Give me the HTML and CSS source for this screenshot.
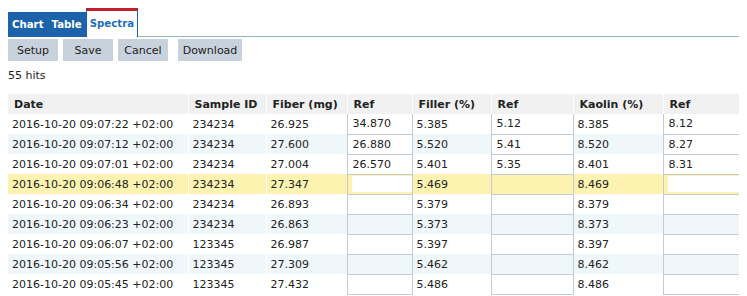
FILE: index.html
```html
<!DOCTYPE html>
<html lang="en">
<head>
    <meta charset="UTF-8">
    <title>Spectra</title>
    <link rel="stylesheet" href="styles.css">
</head>
<body>
    <div class="tabs">
        <span class="tab">Chart</span>
        <span class="tab">Table</span>
        <span class="tab active">Spectra</span>
    </div>

    <div class="toolbar">
        <button class="btn">Setup</button>
        <button class="btn">Save</button>
        <button class="btn">Cancel</button>
        <button class="btn wide">Download</button>
    </div>

    <div class="hits">55 hits</div>

    <table class="grid">
        <colgroup>
            <col style="width: 180px">
            <col style="width: 78px">
            <col style="width: 81px">
            <col style="width: 65px">
            <col style="width: 79px">
            <col style="width: 82px">
            <col style="width: 90px">
            <col style="width: 77px">
        </colgroup>
        <thead>
            <tr>
                <th>Date</th>
                <th>Sample ID</th>
                <th>Fiber (mg)</th>
                <th class="ref-h">Ref</th>
                <th>Filler (%)</th>
                <th class="ref-h">Ref</th>
                <th>Kaolin (%)</th>
                <th class="ref-h">Ref</th>
            </tr>
        </thead>
        <tbody>
            <tr>
                <td>2016-10-20 09:07:22 +02:00</td><td>234234</td><td>26.925</td>
                <td class="ref"><input class="ref-input" value="34.870"></td><td>5.385</td>
                <td class="ref"><input class="ref-input" value="5.12"></td><td>8.385</td>
                <td class="ref"><input class="ref-input" value="8.12"></td>
            </tr>
            <tr class="alt">
                <td>2016-10-20 09:07:12 +02:00</td><td>234234</td><td>27.600</td>
                <td class="ref"><input class="ref-input" value="26.880"></td><td>5.520</td>
                <td class="ref"><input class="ref-input" value="5.41"></td><td>8.520</td>
                <td class="ref"><input class="ref-input" value="8.27"></td>
            </tr>
            <tr>
                <td>2016-10-20 09:07:01 +02:00</td><td>234234</td><td>27.004</td>
                <td class="ref"><input class="ref-input" value="26.570"></td><td>5.401</td>
                <td class="ref"><input class="ref-input" value="5.35"></td><td>8.401</td>
                <td class="ref"><input class="ref-input" value="8.31"></td>
            </tr>
            <tr class="selected">
                <td>2016-10-20 09:06:48 +02:00</td><td>234234</td><td>27.347</td>
                <td class="ref"><input class="ref-input inset" value=""></td><td>5.469</td>
                <td class="ref"></td><td>8.469</td>
                <td class="ref"><input class="ref-input inset" value=""></td>
            </tr>
            <tr>
                <td>2016-10-20 09:06:34 +02:00</td><td>234234</td><td>26.893</td>
                <td class="ref"></td><td>5.379</td><td class="ref"></td><td>8.379</td><td class="ref"></td>
            </tr>
            <tr class="alt">
                <td>2016-10-20 09:06:23 +02:00</td><td>234234</td><td>26.863</td>
                <td class="ref"></td><td>5.373</td><td class="ref"></td><td>8.373</td><td class="ref"></td>
            </tr>
            <tr>
                <td>2016-10-20 09:06:07 +02:00</td><td>123345</td><td>26.987</td>
                <td class="ref"></td><td>5.397</td><td class="ref"></td><td>8.397</td><td class="ref"></td>
            </tr>
            <tr class="alt">
                <td>2016-10-20 09:05:56 +02:00</td><td>123345</td><td>27.309</td>
                <td class="ref"></td><td>5.462</td><td class="ref"></td><td>8.462</td><td class="ref"></td>
            </tr>
            <tr>
                <td>2016-10-20 09:05:45 +02:00</td><td>123345</td><td>27.432</td>
                <td class="ref"></td><td>5.486</td><td class="ref"></td><td>8.486</td><td class="ref"></td>
            </tr>
        </tbody>
    </table>
</body>
</html>
```

FILE: styles.css
```css
* {
    box-sizing: border-box;
}

html, body {
    overflow: hidden;
}

body {
    margin: 8px;
    font-family: 'DejaVu Sans', Verdana, sans-serif;
    font-size: 11px;
    color: #222;
    background: #fff;
}

/* tabs */
.tabs {
    display: flex;
    align-items: flex-end;
    height: 29px;
    margin-right: -8px;
    border-bottom: 1px solid #8db6da;
}
.tab {
    height: 25px;
    line-height: 25px;
    padding: 0 4px;
    margin-bottom: -1px;
    background: #1c63ab;
    color: #fff;
    font-weight: bold;
    font-size: 10.2px;
}
.tab.active {
    height: 29px;
    line-height: 25px;
    background: #fff;
    color: #1d6fc0;
    border-top: 3px solid #c3202c;
    border-left: 1px solid #1c63ab;
    border-right: 1px solid #1c63ab;
    padding: 0 3px;
}

/* buttons */
.toolbar {
    display: flex;
    gap: 5px;
    margin-top: 2px;
}
.btn {
    width: 50px;
    height: 22px;
    padding: 0;
    border: none;
    background: #c8d2dc;
    color: #222;
    font-family: inherit;
    font-size: 11px;
}
.btn.wide {
    width: 64px;
    margin-left: 5px;
}

.hits {
    margin-top: 8px;
    line-height: 14px;
}

/* table */
.grid {
    margin-top: 11px;
    width: 732px;
    table-layout: fixed;
    border-collapse: collapse;
}
.grid th, .grid td {
    height: 20px;
    padding: 0 0 0 4px;
    text-align: left;
    white-space: nowrap;
    border-left: 1px solid #fff;
}
.grid th {
    background: #f1f1f1;
    font-weight: bold;
    padding-left: 6px;
}
.grid th:first-child, .grid td:first-child { border-left: none; }
.grid tr.alt td { background: #eff7fb; }
.grid tr.selected td { background: #fdf3b1; }

.grid td.ref {
    padding: 0;
    border: 1px solid #c3ccd6;
    border-top: none;
}
.ref-input {
    display: block;
    width: 100%;
    height: 19px;
    padding: 0 0 0 5px;
    border: none;
    outline: none;
    background: #fff;
    font-family: inherit;
    font-size: 11px;
    color: #222;
}
.ref-input.inset {
    width: auto;
    height: 16px;
    margin: 1px 4px 2px 4px;
}
```
